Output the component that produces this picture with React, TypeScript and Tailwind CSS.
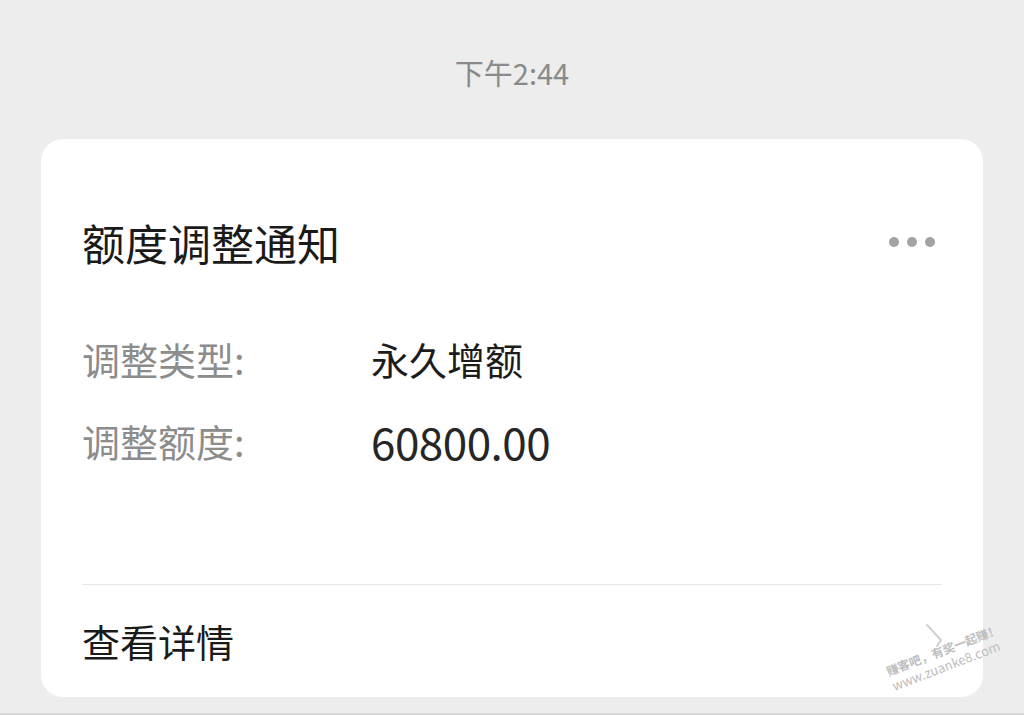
export default function App() {
  const rows = [
    { label: '调整类型:', value: '永久增额', num: false },
    { label: '调整额度:', value: '60800.00', num: true },
  ]

  return (
    <div
      className="relative w-[1024px] h-[715px] overflow-hidden bg-[#ededed] border-b-2 border-[#d9d9d9]"
      style={{ fontFamily: '"Noto Sans CJK SC", "Noto Sans", sans-serif' }}
    >
      {/* time stamp */}
      <div className="pt-[54px] pb-[49px] text-center text-[29px] leading-[36px] text-[#8a8a8a]">
        下午2:44
      </div>

      {/* notification card */}
      <div className="mx-[41px] bg-white rounded-[22px] px-[41px] pt-[78px] pb-[31px]">
        <div className="flex items-center justify-between">
          <div className="text-[43px] leading-[50px] text-[#1a1a1a]">额度调整通知</div>
          <div className="flex items-center gap-[8px] mr-[7px]">
            <span className="w-[10px] h-[10px] rounded-full bg-[#a3a3a3]" />
            <span className="w-[10px] h-[10px] rounded-full bg-[#a3a3a3]" />
            <span className="w-[10px] h-[10px] rounded-full bg-[#a3a3a3]" />
          </div>
        </div>

        <div className="mt-[67px] flex flex-col gap-[32px]">
          {rows.map((row) => (
            <div key={row.label} className="flex items-center text-[38px] leading-[50px]">
              <div className="w-[289px] text-[#8c8c8c]">{row.label}</div>
              <div className={row.num ? 'text-[44px] tracking-[-0.5px] text-[#262626]' : 'text-[#1c1c1c]'}>
                {row.value}
              </div>
            </div>
          ))}
        </div>

        <div className="mt-[118px] h-px bg-[#e6e6e6]" />

        <div className="mt-[31px] text-[38px] leading-[50px] text-[#1a1a1a]">查看详情</div>
      </div>

      {/* watermark */}
      <svg className="absolute left-[924px] top-[622px] pointer-events-none" width="22" height="26" viewBox="0 0 22 26">
        <path d="M3 3 L17 18 L13 24" fill="none" stroke="#d0d0d0" strokeWidth="2" strokeLinecap="round" />
      </svg>
      <div className="absolute left-[884px] top-[664px] -rotate-[21deg] origin-top-left text-[#bdbdbd] text-[12px] leading-[16px] font-bold whitespace-nowrap pointer-events-none">
        <div>赚客吧，有奖一起赚！</div>
        <div className="text-[13px] font-normal">www.zuanke8.com</div>
      </div>
    </div>
  )
}
